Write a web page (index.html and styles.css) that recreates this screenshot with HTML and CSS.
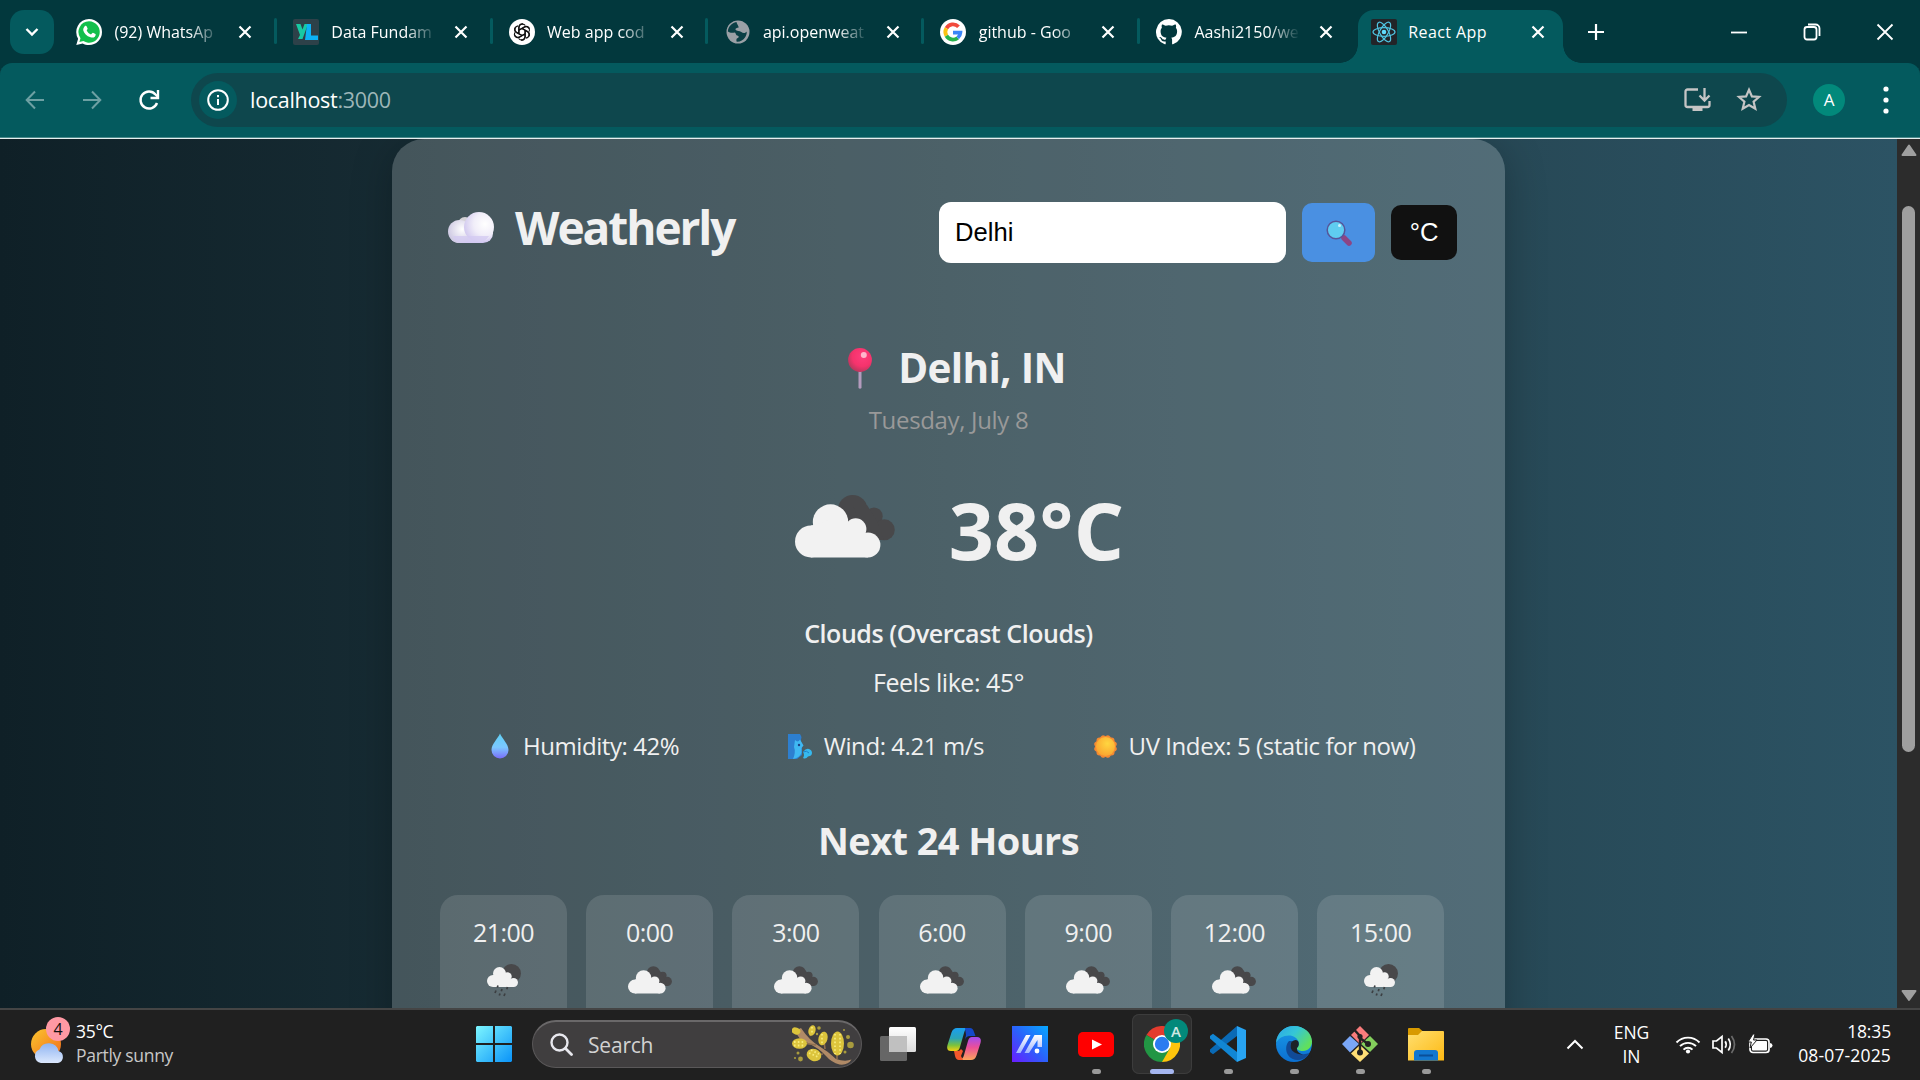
FILE: index.html
```html
<!DOCTYPE html>
<html lang="en">
<head>
<meta charset="utf-8">
<title>React App</title>
<link rel="stylesheet" href="styles.css">
</head>
<body>
<svg class="defs" width="0" height="0" aria-hidden="true">
  <defs>
    <linearGradient id="gWin" x1="0" y1="0" x2="1" y2="1"><stop offset="0" stop-color="#7df6ff"/><stop offset="1" stop-color="#0a93f8"/></linearGradient>
    <linearGradient id="gCloud" x1="0" y1="0" x2="0" y2="1"><stop offset=".3" stop-color="#fff"/><stop offset="1" stop-color="#cfc4f0"/></linearGradient>
    <radialGradient id="gPuffL" cx=".62" cy=".4" r=".65"><stop offset="0" stop-color="#fff"/><stop offset="1" stop-color="#cdc8e2"/></radialGradient>
    <radialGradient id="gPuffR" cx=".7" cy=".4" r=".75"><stop offset="0" stop-color="#fff"/><stop offset=".5" stop-color="#f1eef9"/><stop offset="1" stop-color="#cfc6ee"/></radialGradient>
    <radialGradient id="gPin" cx=".6" cy=".35" r=".7"><stop offset="0" stop-color="#ff3d7c"/><stop offset=".6" stop-color="#f5336c"/><stop offset="1" stop-color="#b0385c"/></radialGradient>
    <linearGradient id="gDrop" x1="0" y1="0" x2="0" y2="1"><stop offset="0" stop-color="#5fd0f5"/><stop offset=".55" stop-color="#7cc8ff"/><stop offset="1" stop-color="#7a6cf8"/></linearGradient>
    <radialGradient id="gSun" cx=".6" cy=".35" r=".7"><stop offset="0" stop-color="#ffd640"/><stop offset="1" stop-color="#fba32e"/></radialGradient>
    <linearGradient id="gSunW" x1="0" y1="0" x2="1" y2="1"><stop offset="0" stop-color="#fbc62e"/><stop offset="1" stop-color="#f26a1b"/></linearGradient>
    <linearGradient id="gCloudW" x1="0" y1="0" x2="0" y2="1"><stop offset="0" stop-color="#8fb4f2"/><stop offset="1" stop-color="#dce8fd"/></linearGradient>
    <linearGradient id="gMA" x1="0" y1="1" x2="1" y2="0"><stop offset="0" stop-color="#6a1cff"/><stop offset=".5" stop-color="#2a62fb"/><stop offset="1" stop-color="#06a9ff"/></linearGradient>
    <linearGradient id="gMAs" x1="0" y1="0" x2="0" y2="1"><stop offset="0" stop-color="#fff"/><stop offset="1" stop-color="#9fb4ff"/></linearGradient>
    <linearGradient id="gCp1" x1="0" y1="0" x2="0" y2="1"><stop offset="0" stop-color="#1b9ff0"/><stop offset=".45" stop-color="#2aa5b8"/><stop offset=".75" stop-color="#7cc23c"/><stop offset="1" stop-color="#f5d010"/></linearGradient>
    <linearGradient id="gCp2" x1="0" y1="0" x2="0" y2="1"><stop offset="0" stop-color="#a24bf0"/><stop offset=".45" stop-color="#ec4f98"/><stop offset="1" stop-color="#fba55c"/></linearGradient>
    <linearGradient id="gEdge1" x1="0" y1="0" x2="1" y2=".6"><stop offset="0" stop-color="#2aa4ea"/><stop offset=".5" stop-color="#35c6d6"/><stop offset="1" stop-color="#62e05a"/></linearGradient>
    <linearGradient id="gEdge2" x1="0" y1="0" x2="0" y2="1"><stop offset="0" stop-color="#1a9be8"/><stop offset="1" stop-color="#0b6fd0"/></linearGradient>
    <linearGradient id="gFold" x1="0" y1="0" x2="1" y2="1"><stop offset="0" stop-color="#ffdf70"/><stop offset="1" stop-color="#fdb913"/></linearGradient>
    <linearGradient id="gTask" x1="0" y1="0" x2="0" y2="1"><stop offset="0" stop-color="#fff"/><stop offset="1" stop-color="#dcdcdc"/></linearGradient>
    <symbol id="x" viewBox="0 0 14 14"><path d="M1.500 1.500l11 11M12.500 1.500l-11 11" stroke="#fff" stroke-width="2.200" fill="none"/></symbol>
    <symbol id="clouds" viewBox="0 0 100 63">
      <g fill="#48484a"><circle cx="57.700" cy="14.700" r="14.700"/><circle cx="79" cy="21.200" r="8.700"/><circle cx="89.300" cy="34.800" r="10.500"/><path d="M58 10h14l10 16 7 19H70z"/></g>
      <g fill="#f2f2f2"><circle cx="35.500" cy="27" r="17.700"/><circle cx="15.900" cy="46.500" r="15.900"/><circle cx="60.700" cy="34" r="10.700"/><circle cx="73" cy="50" r="12.400"/><path d="M15.900 30.600l5-1 14-5 18 2 8 12 9 0 3 10v13.800H15.900z"/></g>
    </symbol>
    <symbol id="rain" viewBox="0 0 34 33">
      <circle cx="24.500" cy="9.500" r="9.500" fill="#48484a"/>
      <g fill="#f2f2f2"><circle cx="12.500" cy="9.500" r="6.500"/><circle cx="6" cy="17" r="6"/><circle cx="20.500" cy="12.500" r="4.200"/><circle cx="26.500" cy="18.500" r="4.500"/><path d="M6 11h3l10-1 4 5 4 2v6H6z"/></g>
      <path d="M11 21.500l-.7 2M15 25l-.7 2.300M20.500 23l-.7 2.300M9 26.500l-1 2.500M13 29.500l-.7 2M18 29.500l-1 2.500" stroke="#3c3f42" stroke-width="1.700"/>
    </symbol>
  </defs>
</svg>

<header class="tabstrip">
  <button class="tab-menu"><svg width="16" height="10" viewBox="0 0 16 10"><path d="M2.500 2l5.500 5.500L13.500 2" fill="none" stroke="#fff" stroke-width="2.400"/></svg></button>
  <div class="tab first">
    <svg class="fav" viewBox="0 0 26 26"><path d="M13 0a13 13 0 0 1 0 26c-2.300 0-4.500-.6-6.300-1.600L.3 26l1.800-6.300A13 13 0 0 1 13 0z" fill="#fff"/><path d="M13 2.300a10.700 10.700 0 1 1-5.600 19.800l-4 1 1.100-3.900A10.700 10.700 0 0 1 13 2.300z" fill="#13bf4c"/><path d="M8.700 7.200c.8-.8 1.600-.6 1.900 0l1 2.300c.2.500-.8 1.600-.9 2 .9 1.900 2.300 3.200 4.300 3.900.6-.4 1.400-1.900 2-1.700l2.500 1.300c.5.300 0 2-.7 2.700-1 .9-2.500 1.200-4.200.6-4-1.300-6.600-4.100-7.300-6.900-.3-1.500.4-3.100 1.400-4.200z" fill="#fff"/></svg>
    <span class="tab-title fade">(92) WhatsAp</span><svg class="close"><use href="#x"/></svg>
  </div>
  <div class="tab">
    <svg class="fav" viewBox="0 0 26 26"><rect width="26" height="26" rx="2" fill="#2d4149"/><path d="M3 5h4.500l2 5.500L11.500 5H15L9.500 20H5l2-4z" fill="#18c9a3"/><path d="M14 5h4v11.500h7V21H12z" fill="#0db2f5"/></svg>
    <span class="tab-title fade">Data Fundam</span><svg class="close"><use href="#x"/></svg>
  </div>
  <div class="tab">
    <svg class="fav" viewBox="0 0 26 26"><circle cx="13" cy="13" r="13" fill="#fff"/><g fill="none" stroke="#111" stroke-width="1.200"><g id="petal"><path d="M10 14.800V8.500a3.500 3.500 0 0 1 6.300-2M10 11l5.500-3.200a3.500 3.500 0 0 1 5 2"/></g><use href="#petal" transform="rotate(60 13 13)"/><use href="#petal" transform="rotate(120 13 13)"/><use href="#petal" transform="rotate(180 13 13)"/><use href="#petal" transform="rotate(240 13 13)"/><use href="#petal" transform="rotate(300 13 13)"/></g></svg>
    <span class="tab-title fade">Web app cod</span><svg class="close"><use href="#x"/></svg>
  </div>
  <div class="tab">
    <svg class="fav" viewBox="0 0 26 26"><circle cx="14" cy="13" r="11.500" fill="#9aa0a6"/><path d="M12.500 3c-5 1-8.500 5-8.600 9.500 1.800 1.500 4.500 1.500 6.800 1 1.500.8.800 3 3.200 3.200 1.300.3 1 2-.6 2.500-1.200.5-1 2.300-.6 3.600 3.600.2 6.500-1.600 8.300-4.200 1.400-2 1.800-4 1.800-6-1.600 2-4 1.800-5.500.3-1.600-1.300-4.800-.6-5.800-2.200-.4-1.600 1.600-1.800 2.900-1.900.8-1.500-1.500-3.300-1.900-5.800z" fill="#0a3f45"/></svg>
    <span class="tab-title fade">api.openweat</span><svg class="close"><use href="#x"/></svg>
  </div>
  <div class="tab">
    <svg class="fav" viewBox="0 0 26 26"><circle cx="13" cy="13" r="13" fill="#fff"/><g fill="none" stroke-width="3.800"><path d="M18.500 7.700A7.600 7.600 0 0 0 6.400 9.200" stroke="#f24a3c"/><path d="M6.400 9.200a7.600 7.600 0 0 0 0 7.600" stroke="#fbc312"/><path d="M6.400 16.800a7.600 7.600 0 0 0 11.300 2.100" stroke="#27b24c"/><path d="M17.700 18.900a7.400 7.400 0 0 0 2.700-5.200H13" stroke="#3a86f8"/></g></svg>
    <span class="tab-title fade">github - Goo</span><svg class="close"><use href="#x"/></svg>
  </div>
  <div class="tab last">
    <svg class="fav" viewBox="0 0 26 26"><path d="M13 0a13 13 0 0 0-4.200 25.300c.7.100.9-.3.900-.6v-2.300c-3.600.8-4.400-1.700-4.400-1.700-.6-1.500-1.500-1.900-1.500-1.900-1.100-.8.100-.8.100-.8 1.300.1 2 1.300 2 1.300 1.200 2 3 1.400 3.800 1.100.1-.8.500-1.400.8-1.700-2.900-.3-5.900-1.400-5.900-6.400 0-1.400.5-2.600 1.300-3.500-.1-.3-.6-1.600.1-3.400 0 0 1.100-.3 3.600 1.300a12 12 0 0 1 6.500 0c2.500-1.600 3.600-1.300 3.600-1.300.7 1.800.3 3.100.1 3.400.8.900 1.300 2.100 1.300 3.500 0 5-3 6.100-5.900 6.400.5.400.9 1.200.9 2.400v3.600c0 .3.200.8.900.6A13 13 0 0 0 13 0z" fill="#fff"/></svg>
    <span class="tab-title fade">Aashi2150/we</span><svg class="close"><use href="#x"/></svg>
  </div>
  <div class="tab active">
    <svg class="fav" viewBox="0 0 26 26"><rect width="26" height="26" rx="2" fill="#222428"/><g fill="none" stroke="#4fc3e0" stroke-width="1.200"><ellipse cx="13" cy="13" rx="11" ry="4.300"/><ellipse cx="13" cy="13" rx="11" ry="4.300" transform="rotate(60 13 13)"/><ellipse cx="13" cy="13" rx="11" ry="4.300" transform="rotate(120 13 13)"/></g><circle cx="13" cy="13" r="2.300" fill="#61dafb"/></svg>
    <span class="tab-title">React App</span><svg class="close"><use href="#x"/></svg>
  </div>
  <svg class="new-tab" viewBox="0 0 18 18"><path d="M9 1v16M1 9h16" stroke="#fff" stroke-width="2.200"/></svg>
  <div class="window-controls">
    <svg width="18" height="18" viewBox="0 0 18 18"><path d="M1 9.500h16" stroke="#fff" stroke-width="1.800"/></svg>
    <svg width="18" height="18" viewBox="0 0 18 18"><g fill="none" stroke="#fff" stroke-width="1.800"><rect x="1.500" y="4" width="12" height="12.500" rx="2.500"/><path d="M5 1.500h7.500a4 4 0 0 1 4 4V13"/></g></svg>
    <svg width="18" height="18" viewBox="0 0 18 18"><path d="M1.500 1.500l15 15M16.500 1.500l-15 15" stroke="#fff" stroke-width="1.800"/></svg>
  </div>
</header>

<nav class="toolbar">
  <div class="nav-buttons">
    <svg width="20" height="20" viewBox="0 0 20 20"><path d="M19 10H2M10 1.500L1.700 10l8.300 8.500" fill="none" stroke="#6da0a3" stroke-width="2"/></svg>
    <svg width="20" height="20" viewBox="0 0 20 20"><path d="M1 10h17M10 1.500l8.300 8.500-8.300 8.500" fill="none" stroke="#6da0a3" stroke-width="2"/></svg>
    <svg width="22" height="22" viewBox="0 0 22 22"><path d="M19 14a8.500 8.500 0 1 1-1.500-8.500L20 8" fill="none" stroke="#fff" stroke-width="2.400"/><path d="M20 1v8H12.500" fill="none" stroke="#fff" stroke-width="2.400"/></svg>
  </div>
  <div class="omnibox">
    <span class="site-info"><svg width="22" height="22" viewBox="0 0 22 22"><circle cx="11" cy="11" r="9.800" fill="none" stroke="#fff" stroke-width="2"/><path d="M11 10v6M11 6v2.200" stroke="#fff" stroke-width="2"/></svg></span>
    <span class="url">localhost<span class="port">:3000</span></span>
    <svg class="install" width="27" height="24" viewBox="0 0 27 24"><path d="M14 1.500H3.500a2 2 0 0 0-2 2V17a2 2 0 0 0 2 2h20a2 2 0 0 0 2-2v-4" fill="none" stroke="#c5c5c5" stroke-width="2.300"/><path d="M8.500 19h10v4h-10z" fill="#c5c5c5"/><path d="M20.500 0v12M15.500 7.500l5 5 5-5" fill="none" stroke="#c5c5c5" stroke-width="2.300"/></svg>
    <svg class="star" width="26" height="25" viewBox="0 0 26 25"><path d="M13 2.800l2.900 6.600 7.100.6-5.400 4.700 1.700 7.100L13 18l-6.300 3.800 1.700-7.100L3 10l7.100-.6z" fill="none" stroke="#c5c5c5" stroke-width="2.200"/></svg>
  </div>
  <span class="avatar">A</span>
  <svg class="menu" width="6" height="28" viewBox="0 0 6 28"><g fill="#fff"><circle cx="3" cy="3" r="2.600"/><circle cx="3" cy="14" r="2.600"/><circle cx="3" cy="25" r="2.600"/></g></svg>
</nav>

<div class="viewport">
  <main class="page">
    <section class="card">
      <header class="card-head">
        <svg class="logo" width="46" height="31" viewBox="0 0 46 31"><circle cx="17" cy="12" r="7" fill="#d4d2d6"/><rect x="1" y="12" width="44" height="19" rx="10" fill="url(#gCloud)"/><circle cx="11.500" cy="19.500" r="11.500" fill="url(#gPuffL)"/><circle cx="31" cy="15" r="15" fill="url(#gPuffR)"/><path d="M5 24h36a15 15 0 0 1-10 7H12q-5-1-7-7z" fill="#d3c9f1" opacity=".75"/></svg>
        <h1 class="brand">Weatherly</h1>
        <form class="search">
          <input class="city" value="Delhi">
          <button class="go" type="button"><svg width="26" height="26" viewBox="0 0 26 26"><path d="M15.500 16l3.500 3" stroke="#5a4a86" stroke-width="2"/><path d="M18 18l5 5" stroke="#8c4585" stroke-width="5.500" stroke-linecap="round"/><circle cx="10" cy="10" r="8.800" fill="#5fcdf0" stroke="#56559a" stroke-width="1.500"/><circle cx="13.500" cy="5.500" r="1.500" fill="#cdf2fc"/></svg></button>
          <button class="unit" type="button">°C</button>
        </form>
      </header>
      <h2 class="place"><svg width="24" height="41" viewBox="0 0 24 41"><path d="M10.500 22h3v18q-1.500 1.500-3 0z" fill="#b49bbd"/><circle cx="12" cy="12" r="11.900" fill="url(#gPin)"/><circle cx="15.800" cy="7" r="3" fill="#ffb6cc"/></svg><span>Delhi, IN</span></h2>
      <p class="date">Tuesday, July 8</p>
      <div class="current">
        <svg class="now-icon"><use href="#clouds"/></svg>
        <span class="temp">38°C</span>
      </div>
      <p class="condition">Clouds (Overcast Clouds)</p>
      <p class="feels">Feels like: 45°</p>
      <div class="details">
        <p class="detail"><svg width="24" height="26" viewBox="0 0 24 26"><path d="M12 .5c2 5 8.500 10.500 8.500 16.500a8.500 8.500 0 0 1-17 0C3.500 11 10 5.500 12 .5z" fill="url(#gDrop)"/></svg><span>Humidity: 42%</span></p>
        <p class="detail"><svg width="25" height="25" viewBox="0 0 25 25"><path d="M0 0h12l1.500 3-1 5 1.500 2v11l-5 4H0z" fill="#2d7fd0"/><path d="M7 6q3 3 5-.5l3.500 6-2 2.500v5q-2 5-8.500 6 3-7 1-12z" fill="#3fb8f2"/><circle cx="11" cy="11" r="1.200" fill="#1d3f86"/><path d="M15 18q3-4 6-3t3 4-4 3.500q-2 3-5 1.500 2-3 0-6z" fill="#36b9ef"/><path d="M15 18q4-2 6 1" stroke="#1e7fc8" fill="none"/></svg><span>Wind: 4.21 m/s</span></p>
        <p class="detail"><svg width="25" height="25" viewBox="0 0 25 25"><g fill="#f58a32"><rect x="3.500" y="3.500" width="18" height="18" rx="3"/><rect x="3.500" y="3.500" width="18" height="18" rx="3" transform="rotate(30 12.500 12.500)"/><rect x="3.500" y="3.500" width="18" height="18" rx="3" transform="rotate(60 12.500 12.500)"/></g><circle cx="12.500" cy="12.500" r="9.500" fill="url(#gSun)"/></svg><span>UV Index: 5 (static for now)</span></p>
      </div>
      <h3 class="next">Next 24 Hours</h3>
      <div class="hours">
        <article class="hour"><span>21:00</span><svg class="hour-icon wet"><use href="#rain"/></svg></article>
        <article class="hour"><span>0:00</span><svg class="hour-icon"><use href="#clouds"/></svg></article>
        <article class="hour"><span>3:00</span><svg class="hour-icon"><use href="#clouds"/></svg></article>
        <article class="hour"><span>6:00</span><svg class="hour-icon"><use href="#clouds"/></svg></article>
        <article class="hour"><span>9:00</span><svg class="hour-icon"><use href="#clouds"/></svg></article>
        <article class="hour"><span>12:00</span><svg class="hour-icon"><use href="#clouds"/></svg></article>
        <article class="hour"><span>15:00</span><svg class="hour-icon wet"><use href="#rain"/></svg></article>
      </div>
    </section>
  </main>
  <aside class="scrollbar">
    <svg width="16" height="13" viewBox="0 0 16 13"><path d="M8 1.500L14.500 11h-13z" fill="#9f9f9f" stroke="#9f9f9f" stroke-width="2" stroke-linejoin="round"/></svg>
    <span class="thumb"></span>
    <svg width="16" height="13" viewBox="0 0 16 13"><path d="M8 11L1.500 2h13z" fill="#9f9f9f" stroke="#9f9f9f" stroke-width="2" stroke-linejoin="round"/></svg>
  </aside>
</div>

<footer class="taskbar">
  <div class="widget">
    <div class="widget-icon">
      <svg width="34" height="34" viewBox="0 0 34 34"><circle cx="15" cy="15" r="15" fill="url(#gSunW)"/><g fill="url(#gCloudW)"><path d="M10 34a7 7 0 0 1-1.500-13.500 10 10 0 0 1 19 1.500A6.200 6.200 0 0 1 27 34z"/></g></svg>
      <span class="badge">4</span>
    </div>
    <div class="widget-text"><span>35°C</span><span class="muted">Partly sunny</span></div>
  </div>
  <div class="apps">
    <svg class="start" width="36" height="36" viewBox="0 0 36 36"><path d="M1 0h16v17H0V1zM19 0h16l1 1v16H19zM0 19h17v17H1l-1-1zM19 19h17v16l-1 1H19z" fill="url(#gWin)"/></svg>
    <div class="task-search">
      <svg width="23" height="23" viewBox="0 0 23 23"><circle cx="9.500" cy="9.500" r="8" fill="none" stroke="#e8e8ee" stroke-width="2.400"/><path d="M15.500 15.500l6 6" stroke="#e8e8ee" stroke-width="2.800" stroke-linecap="round"/></svg>
      <span class="search-label">Search</span>
      <svg class="sprig" width="62" height="40" viewBox="0 0 62 40"><path d="M9 3q8 12 18 18t17 13q9 3 15.500.5-3.500 6-12 5-8-2-14-9T14 17 7 4z" fill="#b08a66"/><path d="M11 18l13 2M22 30l9-1M45 34v-8M33 24l-1-8M18 11l2-5" stroke="#8f6f50" stroke-width="1.600"/><g fill="#dcc43c"><ellipse cx="4" cy="6" rx="4.500" ry="3.400" transform="rotate(20 4 6)"/><ellipse cx="20" cy="5.500" rx="3.500" ry="5.400" transform="rotate(15 20 5.500)"/><ellipse cx="7.500" cy="18.500" rx="7.500" ry="5.200"/><ellipse cx="31" cy="13.500" rx="4.500" ry="7" transform="rotate(15 31 13.500)"/><ellipse cx="22" cy="30" rx="7.500" ry="6" transform="rotate(20 22 30)"/><ellipse cx="45.500" cy="18.500" rx="6.500" ry="12"/></g><g fill="none" stroke="#f6ea7a" stroke-width="1.800" stroke-dasharray="1.600 2.200"><path d="M2 17h11M2 20.500h11M17 28l9 4M19 25l8 4M43 9v20M48 9v20M30 9v10M20 2v7"/></g><g fill="#a99c3e"><circle cx="27" cy="3" r="1.800"/><circle cx="25" cy="9" r="1.200"/><circle cx="56" cy="12" r="2"/><circle cx="58.500" cy="20" r="3.300"/><circle cx="53" cy="27" r="1.500"/><circle cx="52" cy="5" r="1"/><circle cx="6" cy="28" r="1.500"/><circle cx="8.500" cy="34" r="2.400"/><circle cx="3" cy="33" r="1.100"/></g></svg>
    </div>
    <div class="app"><svg width="36" height="36" viewBox="0 0 36 36"><rect x="9" y="1" width="27" height="25" rx="1.500" fill="url(#gTask)"/><rect x="0" y="10" width="27" height="25" rx="1.500" fill="#666"/><path d="M9 10h18v16H9z" fill="#c0c0c0"/></svg></div>
    <div class="app"><svg width="34" height="32" viewBox="0 0 34 32"><path d="M19 0h-9Q6 0 4.500 4.500L.5 17Q-1 23 4 23h5q3 0 4-4l4-14q1-5 6-5z" fill="url(#gCp1)"/><path d="M18 0h5q3 0 4 4l1.500 4H23q-4 0-5 4l1-5z" fill="#1448c8"/><path d="M15 32h9q4 0 5.500-4.500L33.500 15Q35 9 30 9h-5q-3 0-4 4l-4 14q-1 5-6 5z" fill="url(#gCp2)"/><path d="M16 32h-4q-3 0-4-4l-1-5h4q2 0 3-2l2 2-2 5z" fill="#f3572c"/></svg></div>
    <div class="app"><svg width="36" height="36" viewBox="0 0 36 36"><path d="M0 0h36v36H0z" fill="url(#gMA)"/><path d="M4 27L14 9h4.500L8.500 27zM12.500 27l10-18H30v12h-4.500v-7l-8.500 13z" fill="url(#gMAs)"/><circle cx="25" cy="25" r="2.400" fill="#fff"/></svg></div>
    <div class="app run"><svg width="36" height="25" viewBox="0 0 36 25"><rect width="36" height="25" rx="5" fill="#f00"/><path d="M14 7.500v10l10-5z" fill="#fff"/></svg></div>
    <div class="app run focus"><svg width="36" height="36" viewBox="0 0 36 36"><path d="M18 18L2.400 9A18 18 0 0 1 33.600 9z" fill="#e33b2e"/><path d="M18 18L33.600 9A18 18 0 0 1 18 36z" fill="#fdc40c"/><path d="M18 18l7.800 4.500L18 36A18 18 0 0 1 2.400 9z" fill="#229644"/><circle cx="18" cy="18" r="9" fill="#fff"/><circle cx="18" cy="18" r="7.200" fill="#2a7cf0"/></svg><span class="profile">A</span></div>
    <div class="app run"><svg width="36" height="36" viewBox="0 0 36 36"><path d="M27 0l9 4v28l-9 4z" fill="#28a4f2"/><path d="M27 0L0 23.500V26l3 2.200L27 10z" fill="#0a6ab6"/><path d="M27 36L0 12.500V10l3-2.200L27 26z" fill="#1186d4"/></svg></div>
    <div class="app run"><svg width="36" height="36" viewBox="0 0 36 36"><circle cx="18" cy="18" r="18" fill="url(#gEdge2)"/><path d="M0 17C1 6 9 0 18 0c10 0 18 7 18 15.500C36 21 32 25 27 25c-4 0-6.500-1.500-6-3 2-2 2.500-4 1.500-6.500C21 12 17.500 9.500 13 9.500 7 9.500 2 12.500 0 17z" fill="url(#gEdge1)"/><path d="M13 15c-3 3-4 9-1 14s10 6 15 4c3-1 5-3 6.500-6-7 3-18 0-19-7-.3-2 .5-4 2-5z" fill="#114a96"/><path d="M33.500 27q2.500-3 2.500-7v9l-3 7h-8q6-3 8.500-9z" fill="#202020"/><path d="M16 15.500c-2 2-2 6 0 9 3 3 8 4 11 4-4-1-6.500-3.500-6-6.500 2-2 2.500-4.500 1-7-2-1.500-4-1-6 .5z" fill="#1d2226"/></svg></div>
    <div class="app run"><svg width="36" height="36" viewBox="0 0 36 36"><path d="M18 0l9 9-9 9-9-9z" fill="#f97c7c"/><path d="M8 10l9 8-9 8.500L0 18z" fill="#7aa7f7"/><path d="M28 10l8 8-8 8-9-8z" fill="#84cf5c"/><path d="M18 19l9 8.500-9 8.500-9-8.500z" fill="#ffdf76"/><path d="M12.500 4l5.500 6v18M18 12l8 6" fill="none" stroke="#222" stroke-width="2.400"/><circle cx="18" cy="10.500" r="2.600" fill="#222"/><circle cx="26" cy="18" r="3" fill="#222"/><circle cx="18" cy="26.500" r="3" fill="#222"/></svg></div>
    <div class="app run"><svg width="36" height="33" viewBox="0 0 36 33"><path d="M0 1q0-1 1-1h10l4 3.500L11 8H0z" fill="#d89a00"/><path d="M0 7h10l4-4h21q1 0 1 1v28.500H0z" fill="url(#gFold)"/><path d="M6 32.500V25q0-3 3-3h18q3 0 3 3v7.500z" fill="#1277cf"/><path d="M11 27.500h14" stroke="#0a4f98" stroke-width="2"/></svg></div>
  </div>
  <div class="tray">
    <svg class="chev" width="18" height="11" viewBox="0 0 18 11"><path d="M1.500 9.500L9 2l7.500 7.500" fill="none" stroke="#fff" stroke-width="2"/></svg>
    <div class="lang"><span>ENG</span><span>IN</span></div>
    <svg class="wifi" width="26" height="19" viewBox="0 0 26 19"><g fill="none" stroke="#fff" stroke-width="1.900"><path d="M1.500 7.500a16 16 0 0 1 23 0M5 11.200a11.300 11.300 0 0 1 16 0M8.500 14.600a6.500 6.500 0 0 1 9 0"/></g><circle cx="13" cy="16.500" r="2.100" fill="#fff"/></svg>
    <svg class="sound" width="25" height="21" viewBox="0 0 25 21"><g fill="none" stroke="#fff" stroke-width="1.700"><path d="M1 7v7h3.500l5.500 4.500v-16L4.500 7z"/><path d="M13.200 7.200q2 3.300 0 6.600M16.300 4.500q4 6 0 12"/><path d="M19.500 2q6 8.500 0 17" stroke="#6b6b6b"/></g></svg>
    <svg class="power" width="25" height="20" viewBox="0 0 25 20"><rect x="2" y="5" width="19" height="13.500" rx="3" fill="none" stroke="#fff" stroke-width="1.700"/><path d="M22 9q2.500.3 2.500 2.500T22 14z" fill="#fff"/><rect x="4" y="7" width="15" height="9.500" rx="1" fill="#fff"/><path d="M5 0L0 8h3.300L2 14l7-8H5.500L7 0z" fill="#fff" stroke="#202020" stroke-width="1"/></svg>
    <div class="clock"><span>18:35</span><span class="day">08-07-2025</span></div>
  </div>
</footer>
</body>
</html>
```
FILE: styles.css
```css
* { box-sizing: border-box; }
body { margin: 0; width: 1920px; height: 1080px; overflow: hidden; display: flex; flex-direction: column; font-family: "Open Sans", "Noto Sans", sans-serif; color: #fff; background: #02383d; }
h1, h2, h3, p { margin: 0; }
svg { flex: none; display: block; }
button { border: 0; padding: 0; }
.defs { position: absolute; }

.tabstrip { height: 63px; flex: none; display: flex; align-items: center; padding-left: 10px; }
.tab-menu { width: 44px; height: 44px; margin-right: 6px; border-radius: 14px; background: #045a5e; display: flex; align-items: center; justify-content: center; }
.tab { position: relative; width: 215.800px; height: 63px; padding: 0 23.500px 0 17px; display: flex; align-items: center; flex: none; }
.tab.first { padding-left: 16px; }
.tab:not(.last):not(.active)::after { content: ""; position: absolute; right: -1px; top: 18px; width: 3px; height: 26px; border-radius: 2px; background: #045a5e; }
.fav { width: 26px; height: 26px; margin-right: 12.500px; }
.tab-title { flex: 1; font-size: 16px; line-height: 24px; white-space: nowrap; }
.fade { -webkit-mask-image: linear-gradient(90deg, #000 74px, transparent 106px); mask-image: linear-gradient(90deg, #000 74px, transparent 106px); }
.close { width: 14px; height: 14px; margin-left: 20px; }
.tab.active { width: 205px; height: 53px; margin: 10px 0 0 3px; padding: 0 18px 10px 13px; border-radius: 16px 16px 0 0; background: #045a5e; }
.tab.active .fav { margin-right: 11.500px; }
.tab.active .tab-title { letter-spacing: .4px; }
.tab.active::before, .tab.active::after { content: ""; position: absolute; bottom: 0; width: 18px; height: 18px; }
.tab.active::before { left: -18px; background: radial-gradient(circle at 0 0, transparent 17.500px, #045a5e 18px); }
.tab.active::after { right: -18px; background: radial-gradient(circle at 100% 0, transparent 17.500px, #045a5e 18px); }
.new-tab { width: 18px; height: 18px; margin-left: 24px; }
.window-controls { margin-left: auto; margin-right: 26px; display: flex; gap: 55px; }

.toolbar { height: 76px; flex: none; display: flex; align-items: center; padding: 0 31px 2px 25px; background: #045a5e; border-bottom: 1px solid #e5efef; box-shadow: inset 0 -1px #4a8a8c; border-radius: 12px 12px 0 0; }
.nav-buttons { display: flex; align-items: center; gap: 36.500px; width: 166px; }
.omnibox { width: 1596px; height: 54px; border-radius: 27px; background: #0e474d; display: flex; align-items: center; padding: 0 25px 0 8px; }
.site-info { width: 38px; height: 38px; border-radius: 50%; background: #045a5e; display: flex; align-items: center; justify-content: center; margin-right: 13px; }
.url { font-size: 21.500px; line-height: 30px; letter-spacing: -.3px; }
.port { color: #9db6b8; }
.install { margin-left: auto; margin-right: 25px; }
.avatar { width: 32px; height: 32px; margin-left: 26px; border-radius: 50%; background: #02897b; display: flex; align-items: center; justify-content: center; font-size: 17px; }
.menu { margin-left: auto; }

.viewport { height: 869px; flex: none; display: flex; }
.page { width: 1897px; display: flex; justify-content: center; align-items: flex-start; overflow: hidden; background: linear-gradient(to right, #0f2027, #203a43, #2c5364); }
.card { width: 1113px; height: 1100px; padding: 63px 48px 0; border-radius: 32px; background: rgba(255,255,255,.2); box-shadow: 0 8px 40px rgba(0,0,0,.25); color: #f0f0f0; text-align: center; }
.card-head { height: 61px; display: flex; align-items: center; padding-left: 8px; }
.logo { margin-bottom: 10px; }
.brand { font-size: 46px; line-height: 62px; margin: 0 0 11px 21px; font-weight: 700; letter-spacing: -2.050px; }
.search { margin-left: auto; display: flex; align-items: center; gap: 16px; }
.city { width: 347px; height: 61px; border: 0; border-radius: 12px; background: #fff; padding: 0 16px; font: 25.600px "Liberation Sans", Arial, sans-serif; color: #000; }
.go { width: 73px; height: 59px; border-radius: 10px; background: #4a90e2; display: flex; align-items: center; justify-content: center; }
.unit { width: 66px; height: 55px; border-radius: 10px; background: #111; color: #fff; font: 25.600px "Liberation Sans", Arial, sans-serif; }
.place { margin-top: 77px; height: 56px; padding-left: 17px; display: flex; justify-content: center; align-items: center; gap: 26px; font-size: 40.500px; line-height: 56px; font-weight: 700; letter-spacing: -.7px; }
.date { margin-top: 7px; font-size: 24px; line-height: 34px; color: #999; letter-spacing: -.33px; }
.current { margin-top: 43px; height: 100px; padding-left: 22px; display: flex; justify-content: center; align-items: center; gap: 54px; }
.now-icon { width: 100px; height: 63px; margin-bottom: 8px; }
.temp { font-size: 79px; line-height: 100px; font-weight: 700; letter-spacing: .3px; }
.condition { margin-top: 36px; font-size: 25px; line-height: 34px; font-weight: 600; letter-spacing: -.45px; }
.feels { margin-top: 15px; font-size: 25px; line-height: 34px; letter-spacing: -.45px; }
.details { margin-top: 30px; padding-left: 48px; display: flex; gap: 108.500px; font-size: 24px; line-height: 34px; letter-spacing: -.43px; }
.detail { display: flex; align-items: center; gap: 11px; white-space: nowrap; }
.next { margin-top: 52px; font-size: 38px; line-height: 50px; font-weight: 700; letter-spacing: -.6px; }
.hours { margin-top: 30px; display: flex; gap: 19.200px; }
.hour { width: 127px; height: 190px; flex: none; padding-top: 20px; border-radius: 18px; background: rgba(255,255,255,.12); display: flex; flex-direction: column; align-items: center; font-size: 25px; line-height: 34px; letter-spacing: -.5px; }
.hour-icon { width: 44px; height: 28px; margin-top: 17px; }
.hour-icon.wet { width: 34px; height: 33px; margin-top: 15px; }
.scrollbar { width: 23px; background: #2c2c2c; padding: 5px 0 6px; display: flex; flex-direction: column; align-items: center; }
.thumb { width: 13px; height: 546px; margin: 49px 0 auto; border-radius: 7px; background: #9f9f9f; }

.taskbar { height: 72px; flex: none; display: flex; align-items: center; border-top: 2px solid #454545; background: #202020; padding-bottom: 2px; }
.widget { width: 476px; padding-left: 31px; display: flex; }
.widget-icon { position: relative; width: 34px; height: 34px; margin: 10px 11px 0 0; }
.badge { position: absolute; left: 15px; top: -12px; width: 24px; height: 24px; border-radius: 50%; background: #ff99a4; color: #111; font-size: 16px; line-height: 24px; text-align: center; }
.widget-text { display: flex; flex-direction: column; font-size: 17.500px; line-height: 24px; letter-spacing: -.3px; margin-bottom: 2px; }
.muted { color: #c8c8c8; }
.apps { display: flex; align-items: center; }
.task-search { width: 330px; height: 48px; margin: 0 3px 0 20px; padding: 0 7px 0 17px; border: 1px solid #5a5859; border-top: 2px solid #6a6869; border-radius: 24px; background: #403e3f; display: flex; align-items: center; }
.search-label { font-size: 21px; line-height: 30px; margin-left: 15px; color: #d2d2d2; letter-spacing: -.2px; }
.sprig { margin-left: auto; }
.app { position: relative; width: 60px; height: 60px; margin: 0 3px; display: flex; align-items: center; justify-content: center; }
.run::after { content: ""; position: absolute; bottom: 0; left: 26px; width: 9px; height: 5px; border-radius: 3px; background: #9a9a9a; }
.focus { border-radius: 7px; background: #2e2e2e; box-shadow: inset 0 0 0 1px #3c3c3c; }
.focus::after { left: 18px; width: 24px; background: #a5b6f0; }
.profile { position: absolute; left: 32px; top: 5px; width: 24px; height: 24px; border-radius: 50%; background: #02897b; color: #cfe8e4; font-size: 15px; font-weight: 600; line-height: 24px; text-align: center; }
.tray { margin-left: auto; padding-right: 29px; display: flex; align-items: center; font-size: 17.500px; line-height: 24px; letter-spacing: -.15px; white-space: nowrap; }
.lang { margin: 0 26px 0 30px; display: flex; flex-direction: column; align-items: center; }
.sound { margin: 0 11px; }
.clock { width: 94px; margin: 0 0 2px 24px; display: flex; flex-direction: column; align-items: flex-end; }
.day { letter-spacing: .15px; }
```
